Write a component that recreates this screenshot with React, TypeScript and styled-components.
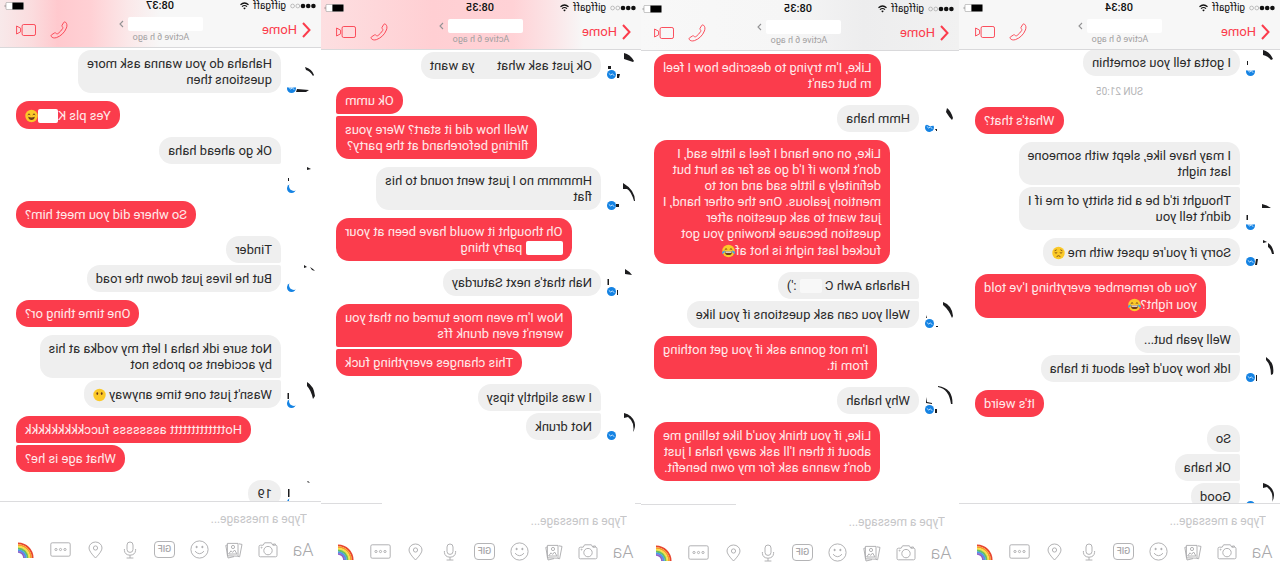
import React from "react";
import styled, { createGlobalStyle, css } from "styled-components";

const RED = "#fb3c4c";
const GREY = "#efefef";
const FONT = 'Roboto, "Liberation Sans", Arial, sans-serif';

const GlobalStyle = createGlobalStyle`
  * { box-sizing: border-box; }
  body { margin: 0; background: #fff; font-family: ${FONT}; }
  button { border: 0; padding: 0; background: none; font: inherit; color: inherit; cursor: pointer; }
`;

/* The whole strip is shown as a mirror image, newest screen on the left. */
const Strip = styled.main`
  display: grid;
  grid-template-columns: 321fr 318fr 320fr 321fr;
  height: 100vh;
  overflow: hidden;
  transform: scaleX(-1);
`;

const Phone = styled.section`
  display: flex;
  flex-direction: column;
  min-width: 0;
  min-height: 0;
  background: #fff;
`;

const Header = styled.header<{ $bg: string; $shift: number }>`
  flex: none;
  height: ${(p) => 50 + p.$shift}px;
  padding-top: ${(p) => 2 + p.$shift}px;
  background: ${(p) => p.$bg};
  border-bottom: 1px solid #d9d9db;
`;

const StatusBar = styled.div<{ $gutter: number }>`
  display: grid;
  grid-template-columns: 1fr auto 1fr;
  align-items: center;
  height: 12px;
  padding: 0 ${(p) => p.$gutter - 12}px 0 5px;
  font-size: 11px;
  line-height: 12px;
  color: #111;
`;

const Carrier = styled.div`
  display: flex;
  align-items: center;
  gap: 4px;
  font-size: 10px;
`;

const Clock = styled.time`
  font-weight: 500;
`;

const Battery = styled.svg`
  justify-self: end;
`;

const Nav = styled.nav<{ $gutter: number }>`
  display: grid;
  grid-template-columns: 106px 1fr 101px;
  align-items: center;
  height: 34px;
  padding: 1px ${(p) => p.$gutter}px 0 10px;
`;

const HomeLink = styled.a`
  display: flex;
  align-items: center;
  gap: 5px;
  color: ${RED};
  font-size: 13px;
  line-height: 16px;
  text-decoration: none;
`;

const Title = styled.div`
  display: flex;
  flex-direction: column;
  align-items: center;
`;

const NameRow = styled.div`
  display: flex;
  align-items: center;
  gap: 4px;
  height: 14px;
`;

const Blank = styled.span<{ $w: number; $h: number; $bg?: string }>`
  display: inline-block;
  width: ${(p) => p.$w}px;
  height: ${(p) => p.$h}px;
  border-radius: 2px;
  background: ${(p) => p.$bg ?? "#fff"};
  vertical-align: -3px;
`;

const Active = styled.span`
  color: #a2a0a1;
  font-size: 9px;
  line-height: 12px;
  white-space: nowrap;
`;

const Calls = styled.div`
  display: flex;
  justify-content: flex-end;
  align-items: center;
  gap: 14px;
  color: ${RED};
  button { display: flex; }
`;

const Body = styled.div`
  flex: 1;
  min-height: 0;
  overflow: hidden;
`;

const Thread = styled.div<{ $top: number; $gutter: number }>`
  display: flex;
  flex-direction: column;
  gap: 8px;
  margin-top: ${(p) => p.$top}px;
  padding-right: ${(p) => p.$gutter}px;
`;

const DateLine = styled.div`
  padding-left: 16px;
  color: #b4b4b6;
  font-size: 10px;
  line-height: 15px;
  text-align: center;
`;

const Group = styled.div`
  display: flex;
  align-items: flex-end;
`;

const Avatar = styled.svg`
  flex: none;
  margin: -3px 5px 0;
`;

const Stack = styled.div<{ $mine: boolean }>`
  display: flex;
  flex: 1;
  flex-direction: column;
  align-items: ${(p) => (p.$mine ? "flex-end" : "flex-start")};
  gap: 2px;
`;

const Bubble = styled.p<{ $mine: boolean; $first: boolean; $last: boolean }>`
  margin: 0;
  min-height: 27px;
  padding: 6px 9px 5px;
  border-radius: 13px;
  font-size: 13px;
  line-height: 16px;
  white-space: pre;
  color: ${(p) => (p.$mine ? "#ffe9ea" : "#2a2a2a")};
  background: ${(p) => (p.$mine ? RED : GREY)};
  ${(p) => !p.$first && (p.$mine ? css`border-top-right-radius: 2px;` : css`border-top-left-radius: 2px;`)}
  ${(p) => !p.$last && (p.$mine ? css`border-bottom-right-radius: 2px;` : css`border-bottom-left-radius: 2px;`)}
`;

const Erased = styled.div`
  height: 27px;
`;

const FaceSvg = styled.svg`
  vertical-align: -4px;
`;

const Composer = styled.form<{ $line: string; $shift: number }>`
  flex: none;
  padding: 1px 0 ${(p) => 7 - p.$shift}px;
  background: ${(p) => p.$line} top / 100% 1px no-repeat;
`;

const Field = styled.input`
  display: block;
  width: 100%;
  height: 34px;
  padding: 0 14px;
  border: 0;
  outline: 0;
  background: none;
  font-family: ${FONT};
  font-size: 12px;
  &::placeholder { color: #c6c6c8; opacity: 1; }
`;

const Tools = styled.div<{ $gutter: number }>`
  display: flex;
  justify-content: space-between;
  align-items: center;
  height: 27px;
  padding: 0 ${(p) => p.$gutter - 1}px 0 7px;
  color: #a9a9ab;
`;

const Tool = styled.button`
  display: flex;
  justify-content: center;
  align-items: center;
  width: 22px;
  height: 22px;
  font-size: 18px;
  font-weight: 300;
`;

/* ---------- drawings ---------- */

const Face = ({ kind }: { kind: "joy" | "sad" | "grin" | "mute" }) => (
  <FaceSvg width="13" height="17" viewBox="0 0 13 17" aria-hidden="true">
    <circle cx="6.5" cy="9" r="6.2" fill="#fbc928" />
    {kind === "joy" && (
      <g>
        <path d="M2.8 9.2h7.4a3.7 3.9 0 0 1-7.4 0z" fill="#6b3a1a" />
        <path d="M3.2 9.4h6.6l-.4 1.3H3.6z" fill="#fff" />
        <path d="M2.8 7.6q1.2-1.6 2.4-.2M7.8 7.4q1.2-1.4 2.4.2" fill="none" stroke="#6b3a1a" strokeWidth=".9" />
        <path d="M0 10.6Q.6 8.4 3 8.4 2.6 11.4 1 11.6T0 10.6zM13 10.6q-.6-2.2-3-2.2.4 3 2 3.2t1-1z" fill="#45a5e8" />
      </g>
    )}
    {kind === "sad" && (
      <path d="M2.8 8.6q1.2 1 2.4 0M7.8 8.6q1.2 1 2.4 0M2.6 6.8l2-1M10.4 6.8l-2-1M4.6 12.6q1.9-1.8 3.8 0" fill="none" stroke="#7a4a12" strokeWidth=".9" />
    )}
    {kind === "grin" && (
      <g>
        <path d="M3.2 9.8q3.3 1.2 6.6 0-.6 3.2-3.3 3.2T3.2 9.8z" fill="#6b3a1a" />
        <path d="M2.8 7.8q1.2-1.8 2.4 0M7.8 7.8q1.2-1.8 2.4 0" fill="none" stroke="#6b3a1a" strokeWidth="1" />
      </g>
    )}
    {kind === "mute" && (
      <g fill="#6b3a1a">
        <ellipse cx="4.3" cy="7.6" rx=".9" ry="1.3" />
        <ellipse cx="8.7" cy="7.6" rx=".9" ry="1.3" />
      </g>
    )}
  </FaceSvg>
);

type Badge = "full" | "low" | "crescent" | "blob";

const AvatarMark = ({ scraps, badge }: { scraps: string; badge: Badge }) => (
  <Avatar width="30" height="30" viewBox="0 0 30 30" aria-hidden="true">
    <path d={scraps} fill="#1c1c1e" />
    <circle cx="24.5" cy="25.5" r="4.5" fill="#1583e3" />
    {badge !== "crescent" && (
      <path d="M21.8 26.8l1.8-2 1.6 1.3 2-1.7" fill="none" stroke="#cfe8ff" strokeWidth=".9" />
    )}
    {badge === "low" && <path d="M19 20h11v4q-5 1.6-11 0z" fill="#fff" />}
    {badge === "crescent" && <circle cx="22" cy="23" r="5" fill="#fff" />}
    {badge === "blob" && <path d="M18 20h12v3.4l-3-.6-3 1.4-6-1zM18 30v-2.4l6 2.4z" fill="#fff" />}
  </Avatar>
);

const Chevron = () => (
  <svg width="9" height="16" viewBox="0 0 9 16" aria-hidden="true">
    <path d="M1 1 7.5 8 1 15" transform="matrix(-1 0 0 1 9 0)" fill="none" stroke="currentColor" strokeWidth="2" />
  </svg>
);

const SmallChevron = () => (
  <svg width="5" height="8" viewBox="0 0 5 8" aria-hidden="true">
    <path d="M1 1l3 3-3 3" fill="none" stroke="#929294" strokeWidth="1.1" />
  </svg>
);

const Signal = () => (
  <svg width="26" height="6" viewBox="0 0 26 6" aria-hidden="true">
    <circle cx="2.6" cy="3" r="2.3" fill="#111" />
    <circle cx="7.8" cy="3" r="2.3" fill="#111" />
    <circle cx="13" cy="3" r="2.3" fill="#111" />
    <circle cx="18.2" cy="3" r="1.9" fill="none" stroke="#999" strokeWidth=".6" />
    <circle cx="23.4" cy="3" r="1.9" fill="none" stroke="#999" strokeWidth=".6" />
  </svg>
);

const Wifi = () => (
  <svg width="9" height="8" viewBox="0 0 9 8" fill="none" stroke="#111" strokeWidth="1.2" aria-hidden="true">
    <path d="M.5 2.8q4-3.6 8 0M2 4.6q2.5-2.2 5 0" />
    <path d="M3.2 6 4.5 7.6 5.8 6Q4.5 5 3.2 6z" fill="#111" stroke="none" />
  </svg>
);

const BatteryMark = () => (
  <Battery width="20" height="8" viewBox="0 0 20 8" aria-hidden="true">
    <rect x=".4" y=".4" width="17.6" height="7.2" rx="1" fill="#fff" stroke="#999" strokeWidth=".6" />
    <rect x=".6" y=".6" width="11" height="6.8" fill="#000" />
    <path d="M18.8 2.6q1 1.4 0 2.8z" fill="#222" />
  </Battery>
);

const CallIcon = () => (
  <svg width="18" height="18" viewBox="0 0 18 18" aria-hidden="true">
    <path
      d="M2.5 1.2C1 2.5.6 4.5 1.6 7c1.8 4.5 5.4 8 9.9 9.6 2.5.8 4.3.2 5.3-1.2.4-.6.2-1.2-.4-1.6L13.6 12c-.6-.4-1.2-.2-1.8.4-.6.6-1.2.6-2 0C8 11 6.6 9.4 5.4 7.6 5 6.8 5 6.2 5.6 5.8c.6-.6.6-1.2.2-1.8L4.2 1.4C3.8.8 3.2.7 2.5 1.2z"
      fill="none" stroke="currentColor" strokeWidth=".9"
    />
  </svg>
);

const VideoIcon = () => (
  <svg width="20" height="12" viewBox="0 0 20 12" fill="none" stroke="currentColor" strokeWidth=".9" aria-hidden="true">
    <rect x=".5" y=".5" width="13.4" height="11" rx="1.6" />
    <path d="M15.4 4.2 19.4 2v8l-4-2.2z" />
  </svg>
);

const line = { fill: "none", stroke: "currentColor", strokeWidth: 0.9 } as const;

const CameraIcon = () => (
  <svg width="20" height="18" viewBox="0 0 20 18" {...line}>
    <path d="M2.4 4.2h2.8l1.4-2.4h6.8l1.4 2.4h2.8q1.4 0 1.4 1.4v8.8q0 1.4-1.4 1.4H2.4Q1 15.8 1 14.4V5.6q0-1.4 1.4-1.4zM2.6 4V3h2v1" />
    <circle cx="10" cy="9.6" r="4.2" />
    <circle cx="16.4" cy="6.6" r=".5" />
  </svg>
);

const PhotosIcon = () => (
  <svg width="18" height="18" viewBox="0 0 18 18" {...line}>
    <path d="M4.2 2.8 1 3.4l2.4 12.4 1.6-.4M5 2.4h10.6v12.4l-10.6.4z" />
    <path d="M15.8 4 17.2 4.4 15 17l-6-1.4M6 13l2.4-4 2 2.4 1.6-1.6 2.4 3.2z" />
    <circle cx="10" cy="6" r="1.6" />
  </svg>
);

const SmileIcon = () => (
  <svg width="19" height="19" viewBox="0 0 19 19" {...line}>
    <circle cx="9.5" cy="9.5" r="8.6" />
    <path d="M5 11.2q4.5 5 9 0" />
    <circle cx="6.6" cy="7" r=".7" fill="currentColor" />
    <circle cx="12.4" cy="7" r=".7" fill="currentColor" />
  </svg>
);

const GifBox = styled.span`
  width: 21px;
  height: 17px;
  border: 1px solid #b4b4b6;
  border-radius: 4px;
  font-size: 9px;
  font-weight: 500;
  line-height: 15px;
  text-align: center;
`;

const MicIcon = () => (
  <svg width="14" height="18" viewBox="0 0 14 18" {...line}>
    <rect x="4" y="1" width="6" height="10.4" rx="3" />
    <path d="M1.4 8v1.4q.4 4.6 5.6 4.8 5.2-.2 5.6-4.8V8M7 14.2V17M3.6 17h6.8" />
  </svg>
);

const PinIcon = () => (
  <svg width="15" height="18" viewBox="0 0 15 18" {...line}>
    <path d="M7.5 17Q1 10.4 1 7a6.5 6 0 0 1 13 0q0 3.4-6.5 10z" />
    <circle cx="7.5" cy="7" r="2.1" />
  </svg>
);

const DotsIcon = () => (
  <svg width="21" height="15" viewBox="0 0 21 15" {...line}>
    <rect x=".8" y=".8" width="19.4" height="13.4" rx="1.4" />
    <circle cx="6" cy="7.5" r="1.1" />
    <circle cx="10.5" cy="7.5" r="1.1" />
    <circle cx="15" cy="7.5" r="1.1" />
  </svg>
);

const RainbowIcon = () => (
  <svg width="16" height="16" viewBox="0 0 16 16" fill="none" strokeWidth="1.9">
    {["#e8452f", "#f59a2c", "#f7e04a", "#6cc35a", "#4a9be8", "#8d63c9"].map((c, i) => {
      const r = 14.6 - i * 1.7;
      return <path key={c} d={`M${16 - r} 16A${r} ${r} 0 0 1 16 ${16 - r}`} stroke={c} />;
    })}
  </svg>
);

/* ---------- data ---------- */

type Item =
  | { kind: "date"; text: string }
  | { kind: "mine"; lines: React.ReactNode[] }
  | { kind: "theirs"; lines: (React.ReactNode | null)[]; scraps: string; badge: Badge };

interface Shot {
  time: string;
  shift: number;
  top: number;
  gutter: number;
  header: string;
  rule: string;
  items: Item[];
}

const mine = (...lines: React.ReactNode[]): Item => ({ kind: "mine", lines });
const theirs = (scraps: string, badge: Badge, ...lines: React.ReactNode[]): Item => ({
  kind: "theirs",
  lines,
  scraps,
  badge,
});

const ARC = "M12 3v5L8 7Q4 10 3 14q-1 5 0 8Q0 17 1.5 12 4 5 12 3z";
const FULL_RULE = "linear-gradient(#dcdcde, #dcdcde)";

const SHOTS: Shot[] = [
  {
    time: "08:34", shift: 0, top: -1, gutter: 16, header: "#f7f7f7", rule: FULL_RULE,
    items: [
      theirs("M12 4v5Q7 10 4 14L2 13Q5 6 12 4zM27 15h1v4h-1z", "low", "I gotta tell you somethin"),
      { kind: "date", text: "SUN 21:05" },
      mine("What's that?"),
      theirs("M13 4v4H4Q8 5 13 4zM27 15h1.5v7H27z", "low", "I may have like, slept with someone\nlast night", "Thought it'd be a bit shitty of me if I\ndidn't tell you"),
      theirs("M12 4v3L8 6zM7 7v4Q4 13 3 18H1Q2 10 7 7zM17 23h2l1 6h-2z", "full", <>Sorry if you're upset with me <Face kind="sad" /></>),
      mine(<>{"You do remember everything I've told\nyou right?"}<Face kind="joy" /></>),
      theirs("M9 5v3Q4 13 4 23L2 22Q0 11 9 5zM18 23h1v6h-1z", "full", "Well yeah but...", "Idk how you'd feel about it haha"),
      mine("It's weird"),
      theirs(ARC, "full", "So", "Ok haha", "Good"),
    ],
  },
  {
    time: "08:35", shift: 1, top: 3, gutter: 13,
    header: "linear-gradient(90deg, #f1f1f1, #ededee 30%, #f6f6f6 55%, #f8f8f8)",
    rule: "linear-gradient(90deg, transparent 70%, #dcdcde 70%)",
    items: [
      mine("Like, I'm trying to describe how I feel\nrn but can't"),
      theirs("M7 6l1 4Q5 15 2 18L1 16Q3 9 7 6zM17 27h2v2h-2z", "blob", "Hmm haha"),
      mine(<>{"Like, on one hand I feel a little sad, I\ndon't know if I'd go as far as hurt but\ndefinitely a little sad and not to\nmention jealous. One the other hand, I\njust want to ask question after\nquestion because knowing you got\nfucked last night is hot af"}<Face kind="joy" /></>),
      theirs("M11 4v3Q5 12 2 20L1 18Q2 7 11 4zM27 17l1 3h-1zM16 28h2v1h-2z", "full", <>Hahaha Awh C <Blank $w={22} $h={14} $bg="#f8f8f8" /> :')</>, "Well you can ask questions if you like"),
      mine("I'm not gonna ask if you get nothing\nfrom it."),
      theirs("M16 2v1Q5 5 3 20H1.5Q1 4 16 2zM28 13v6l-6 1v-1l5-1zM17 25h2v4h-2z", "full", "Why hahah"),
      mine("Like, if you think you'd like telling me\nabout it then I'll ask away haha I just\ndon't wanna ask for my own benefit."),
    ],
  },
  {
    time: "08:35", shift: 0, top: 2, gutter: 15,
    header: "linear-gradient(90deg, #f7f7f7 18%, #fbe6e8 27%, #ffd2d6 40%, #ffcfd3 65%, #fddfe1 100%)",
    rule: "linear-gradient(90deg, #dcdcde 2%, transparent 2% 81%, #dcdcde 81%)",
    items: [
      theirs("M12 4v6L3 13 2 12Q6 5 12 4zM25 17h3v3h-3zM16 25h3v4h-2z", "full", <>Ok just ask what <Blank $w={16} $h={14} $bg={GREY} /> ya want</>),
      mine("Ok umm", "Well how did it start? Were yous\nflirting beforehand at the party?"),
      theirs("M13 3v6L9 9Q5 11 2 21H1Q1 10 13 3zM17 24h3v3h-3z", "full", "Hmmmm no I just went round to his\nflat"),
      mine(<>{"Oh thought it would have been at your\n"}<Blank $w={37} $h={14} /> party thing</>),
      theirs("M11 3v5L4 9Q7 5 11 3zM27 13h1.5v6H27zM18 24h1v5h-1z", "full", "Nah that's next Saturday"),
      mine("Now I'm even more turned on that you\nweren't even drunk ffs", "This changes everything fuck"),
      theirs(ARC, "full", "I was slightly tipsy", "Not drunk"),
    ],
  },
  {
    time: "08:37", shift: -2, top: 2, gutter: 16,
    header: "linear-gradient(90deg, #f7f7f7 50%, #fbe8e9 60%, #ffd0d4 72%, #ffc9ce 82%, #fbdcde 90%, #f8e9ea 100%)",
    rule: FULL_RULE,
    items: [
      theirs("M11 4l-1 3Q6 8 3 13L2 12Q4 6 11 4zM19 26l1 3H10l-3-2z", "low", "Hahaha do you wanna ask more\nquestions then"),
      mine(<>Yes pls K<Blank $w={20} $h={14} /><Face kind="grin" /></>),
      theirs("M9 4v3L5 6zM27 15h1v3h-1z", "crescent", "Ok go ahead haha", null),
      mine("So where did you meet him?"),
      theirs("M12 3v3l-3-1zM6 5L3 7 1 9l3-1z", "crescent", "Tinder", "But he lives just down the road"),
      mine("One time thing or?"),
      theirs("M9 4v4Q5 12 3 21L1 18Q2 8 9 4zM27 15h1.5v6H27z", "crescent", "Not sure idk haha I left my vodka at his\nby accident so probs not", <>Wasn't just one time anyway <Face kind="mute" /></>),
      mine("Hottttttttttttt asssssss fucckkkkkkkkk", "What age is he?"),
      theirs("M8 4l1 1-3 1zM26.5 12h1.5v8h-1.5z", "crescent", "19"),
    ],
  },
];

const MessageGroup = ({ item }: { item: Item }) => {
  if (item.kind === "date") return <DateLine>{item.text}</DateLine>;
  const isMine = item.kind === "mine";
  return (
    <Group>
      {item.kind === "theirs" && <AvatarMark scraps={item.scraps} badge={item.badge} />}
      <Stack $mine={isMine}>
        {item.lines.map((l, i) =>
          l === null ? (
            <Erased key={i} />
          ) : (
            <Bubble key={i} $mine={isMine} $first={i === 0} $last={i === item.lines.length - 1}>
              {l}
            </Bubble>
          ),
        )}
      </Stack>
    </Group>
  );
};

const ChatScreen = ({ shot }: { shot: Shot }) => (
  <Phone>
    <Header $bg={shot.header} $shift={shot.shift}>
      <StatusBar $gutter={shot.gutter}>
        <Carrier>
          <Signal />
          giffgaff
          <Wifi />
        </Carrier>
        <Clock>{shot.time}</Clock>
        <BatteryMark />
      </StatusBar>
      <Nav $gutter={shot.gutter}>
        <HomeLink href="#home">
          <Chevron />
          Home
        </HomeLink>
        <Title>
          <NameRow>
            <Blank $w={75} $h={14} />
            <SmallChevron />
          </NameRow>
          <Active>Active 6 h ago</Active>
        </Title>
        <Calls>
          <button type="button" aria-label="Call"><CallIcon /></button>
          <button type="button" aria-label="Video call"><VideoIcon /></button>
        </Calls>
      </Nav>
    </Header>
    <Body>
      <Thread $top={shot.top} $gutter={shot.gutter}>
        {shot.items.map((item, i) => (
          <MessageGroup key={i} item={item} />
        ))}
      </Thread>
    </Body>
    <Composer $line={shot.rule} $shift={shot.shift} onSubmit={(e) => e.preventDefault()}>
      <Field aria-label="Message" placeholder="Type a message..." />
      <Tools $gutter={shot.gutter}>
        <Tool type="button">Aa</Tool>
        <Tool type="button" aria-label="Camera"><CameraIcon /></Tool>
        <Tool type="button" aria-label="Photos"><PhotosIcon /></Tool>
        <Tool type="button" aria-label="Stickers"><SmileIcon /></Tool>
        <Tool type="button"><GifBox>GIF</GifBox></Tool>
        <Tool type="button" aria-label="Voice"><MicIcon /></Tool>
        <Tool type="button" aria-label="Location"><PinIcon /></Tool>
        <Tool type="button" aria-label="More"><DotsIcon /></Tool>
        <Tool type="button" aria-label="Rainbow"><RainbowIcon /></Tool>
      </Tools>
    </Composer>
  </Phone>
);

export default function App() {
  return (
    <>
      <GlobalStyle />
      <Strip>
        {SHOTS.map((shot, i) => (
          <ChatScreen key={i} shot={shot} />
        ))}
      </Strip>
    </>
  );
}
